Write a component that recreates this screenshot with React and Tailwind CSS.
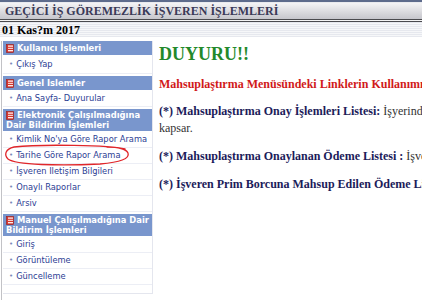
import React from "react";

const serif = { fontFamily: '"Liberation Serif", "Times New Roman", serif' };
const sans = { fontFamily: '"DejaVu Sans", Verdana, sans-serif' };

function BookIcon() {
  return (
    <svg width="8" height="9" viewBox="0 0 8 9" className="inline-block mr-[3px] -mt-[1px] align-middle shrink-0">
      <rect x="0.5" y="0.5" width="7" height="8" fill="#d8342c" stroke="#9c1c16" strokeWidth="0.6" />
      <rect x="2" y="1.5" width="5" height="1.2" fill="#fff" />
      <rect x="2" y="3.8" width="5" height="1.2" fill="#f4d0cc" />
      <rect x="2" y="6.1" width="5" height="1.2" fill="#fff" />
    </svg>
  );
}

function Header({ children, first, double }) {
  return (
    <div
      className={`bg-[#7996cd] text-white font-bold text-[8.4px] leading-[10px] pl-[3px] pr-0 whitespace-nowrap ${
        double ? "py-[1px]" : "py-[2px]"
      } ${first ? "" : "mt-[2px]"} mb-[1px]`}
    >
      <BookIcon />
      {children}
    </div>
  );
}

function Item({ children, tall }) {
  return (
    <div
      className={`${tall ? "h-[18px]" : "h-[16px]"} flex items-center pl-[6px] border-b border-[#eceef5] text-[#2b3d93] text-[8.3px] whitespace-nowrap`}
    >
      <span className="text-[#7a88b8] mr-[3px] text-[7px]">•</span>
      {children}
    </div>
  );
}

export default function App() {
  return (
    <div className="w-[422px] h-[300px] overflow-hidden bg-white relative">
      <div className="h-[2px] bg-[#5d6b8c]" />
      <div className="h-[1px] bg-[#e9eaee]" />
      <div
        className="h-[16px] flex items-center pl-[5px] bg-gradient-to-b from-[#f4f4f6] to-[#c6c6cc] text-[12px] font-bold text-[#3a3a58] whitespace-nowrap"
        style={serif}
      >
        GEÇİCİ İŞ GÖREMEZLİK İŞVEREN İŞLEMLERİ
      </div>
      <div className="h-[1px] bg-[#4a4a4e]" />
      <div className="h-[1px] bg-[#f4f4f4]" />
      <div className="h-[1px] bg-[#4a4a4e]" />
      <div
        className="h-[15px] flex items-center pl-[2px] text-[12px] font-bold text-black bg-[image:repeating-linear-gradient(to_bottom,#e6e8ee_0px,#e6e8ee_1px,#f6f7f9_1px,#f6f7f9_2px)]"
        style={serif}
      >
        01 Kas?m 2017
      </div>

      <div className="flex mt-[4px]">
        <div className="ml-[1px] border-l border-[#c2c2c6] pl-[1px] h-[260px] shrink-0">
          <div className="w-[150px] border-r border-b border-[#e4e6ee] bg-white pb-[8px]" style={sans}>
            <Header first>Kullanıcı İşlemleri</Header>
            <Item tall>Çıkış Yap</Item>
            <Header>Genel Islemler</Header>
            <Item>Ana Sayfa- Duyurular</Item>
            <Header double>
              Elektronik Çalışılmadığına
              <br />
              Dair Bildirim İşlemleri
            </Header>
            <Item>Kimlik No'ya Göre Rapor Arama</Item>
            <Item>Tarihe Göre Rapor Arama</Item>
            <Item>İşveren Iletişim Bilgileri</Item>
            <Item>Onaylı Raporlar</Item>
            <Item>Arsiv</Item>
            <Header double>
              Manuel Çalışılmadığına Dair
              <br />
              Bildirim İşlemleri
            </Header>
            <Item>Giriş</Item>
            <Item>Görüntüleme</Item>
            <Item>Güncelleme</Item>
          </div>
        </div>

        <div className="flex-1 min-w-0 overflow-hidden pl-[6px] pt-[2px]" style={serif}>
          <div className="text-[18px] leading-[22px] font-bold text-[#23892a] whitespace-nowrap">DUYURU!!</div>
          <p className="mt-[11px] text-[12px] leading-[17px] font-bold text-[#d11a1a] whitespace-nowrap">
            Mahsuplaştırma Menüsündeki Linklerin Kullanımı Hakkında
          </p>
          <p className="mt-[10px] text-[12px] leading-[17px] text-[#333] whitespace-nowrap">
            <b className="text-[#1c1c5a]">(*) Mahsuplaştırma Onay İşlemleri Listesi:</b> İşyerinde çalışan sigortalılara ait
            <br />
            kapsar.
          </p>
          <p className="mt-[11px] text-[12px] leading-[17px] text-[#333] whitespace-nowrap">
            <b className="text-[#1c1c5a]">(*) Mahsuplaştırma Onaylanan Ödeme Listesi :</b> İşveren tarafından onaylanan
          </p>
          <p className="mt-[11px] text-[12px] leading-[17px] text-[#333] whitespace-nowrap">
            <b className="text-[#1c1c5a]">(*) İşveren Prim Borcuna Mahsup Edilen Ödeme Listesi</b>
          </p>
        </div>
      </div>

      <svg className="absolute left-0 top-[142px] pointer-events-none" width="140" height="30" viewBox="0 0 140 30">
        <path
          d="M125 7 C 110 3, 40 2, 14 5 C 5 7, 4 13, 8 17 C 15 23, 60 24, 100 22 C 120 20, 130 17, 128 11 C 126 7, 117 5, 107 5"
          fill="none"
          stroke="#e0262a"
          strokeWidth="1.3"
          strokeLinecap="round"
        />
      </svg>
    </div>
  );
}
